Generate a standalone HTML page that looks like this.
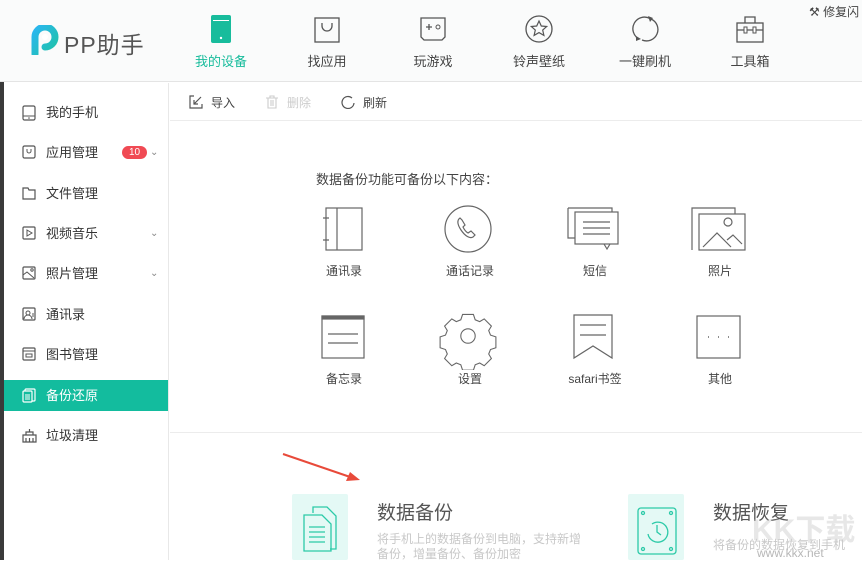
<!DOCTYPE html>
<html><head><meta charset="utf-8"><style>
*{margin:0;padding:0;box-sizing:border-box}
body{width:862px;height:560px;overflow:hidden;background:#fff;font-family:"Liberation Sans","Noto Sans CJK SC",sans-serif;position:relative;color:#333}
.abs{position:absolute}
.hdr{left:0;top:0;width:862px;height:82px;background:#fafbfb;border-bottom:1px solid #e4e4e4}
.nav{position:absolute;top:15px;width:90px;text-align:center;font-size:13px;color:#444}
.nav svg{display:block;margin:0 auto 8px}
.side{left:4px;top:83px;width:165px;height:477px;background:#fff;border-right:1px solid #e8e8e8}
.si{position:absolute;left:0;width:164px;height:31px;font-size:13px;color:#333;line-height:31px;padding-left:42px}
.si svg{position:absolute;left:18px;top:8px}
.tb{left:170px;top:83px;width:692px;height:38px;border-bottom:1px solid #ececec;font-size:12px;color:#444}
.lbl{position:absolute;font-size:12px;color:#444;text-align:center;width:100px}
</style></head><body>
<div class="abs" style="left:0;top:0;width:4px;height:560px;background:#3a3a3a"></div>
<div class="abs hdr"></div>
<svg class="abs" style="left:31px;top:25px" width="30" height="30" viewBox="0 0 30 30"><defs><linearGradient id="g" x1="0" y1="0" x2="1" y2="1"><stop offset="0" stop-color="#2bb6f0"/><stop offset="1" stop-color="#1ec3a6"/></linearGradient></defs><path d="M4 29V12A10 10 0 1 1 14 22" fill="none" stroke="url(#g)" stroke-width="7" stroke-linecap="round"/><circle cx="14" cy="12" r="3" fill="#fff"/></svg>
<div class="abs" style="left:64px;top:26px;font-size:23px;color:#555;letter-spacing:1px">PP助手</div>
<div class="nav" style="left:176px;color:#18bc9c"><svg width="22" height="28" viewBox="0 0 22 28"><rect x="1" y="0" width="20" height="28" rx="2" fill="#18bc9c"/><rect x="3" y="5" width="16" height="1" fill="#fff"/><circle cx="11" cy="23" r="1.2" fill="#fff"/></svg>我的设备</div>
<div class="nav" style="left:282px"><svg width="26" height="28" viewBox="0 0 26 28"><rect x="1" y="3" width="24" height="24" fill="none" stroke="#555" stroke-width="1.3"/><path d="M8 8v3a5 5 0 0 0 10 0V8" fill="none" stroke="#555" stroke-width="1.3"/></svg>找应用</div>
<div class="nav" style="left:388px"><svg width="28" height="28" viewBox="0 0 28 28"><path d="M2 3h24v19l-3 3H5l-3-3z" fill="none" stroke="#555" stroke-width="1.3"/><path d="M7 12h6M10 9v6" stroke="#555" stroke-width="1.3"/><circle cx="19" cy="12" r="2" fill="none" stroke="#555"/></svg>玩游戏</div>
<div class="nav" style="left:494px"><svg width="28" height="28" viewBox="0 0 28 28"><circle cx="14" cy="14" r="13" fill="none" stroke="#555" stroke-width="1.3"/><path d="M14 6l2.3 5 5.4.5-4 3.6 1.2 5.3L14 17.6 9.1 20.4l1.2-5.3-4-3.6 5.4-.5z" fill="none" stroke="#555" stroke-width="1.2"/></svg>铃声壁纸</div>
<div class="nav" style="left:600px"><svg width="30" height="28" viewBox="0 0 30 28"><path d="M9 24A11 11 0 0 1 20 3.5M21 4A11 11 0 0 1 12 25" fill="none" stroke="#555" stroke-width="1.3"/><path d="M18 1l5 2-3 4z M6 21l5 3-5 2z" fill="#555"/></svg>一键刷机</div>
<div class="nav" style="left:705px"><svg width="28" height="28" viewBox="0 0 28 28"><rect x="1" y="8" width="26" height="19" fill="none" stroke="#555" stroke-width="1.3"/><path d="M9 8V2h10v6M1 15h26" fill="none" stroke="#555" stroke-width="1.3"/><rect x="8" y="12" width="3" height="6" fill="#fff" stroke="#555"/><rect x="17" y="12" width="3" height="6" fill="#fff" stroke="#555"/></svg>工具箱</div>
<div class="abs" style="left:809px;top:3px;font-size:12px;color:#444;white-space:nowrap">&#x2692;&#xFE0E; 修复闪</div>

<div class="abs side">
<div class="si" style="top:14px"><svg width="14" height="16" viewBox="0 0 14 16"><rect x="1" y="1" width="12" height="14" rx="1.5" fill="none" stroke="#555" stroke-width="1.2"/><path d="M1 11h12" stroke="#555"/><circle cx="7" cy="13" r=".8" fill="#555"/></svg>我的手机</div>
<div class="si" style="top:54px"><svg width="14" height="14" viewBox="0 0 14 14"><rect x="1" y="1" width="12" height="12" rx="1.5" fill="none" stroke="#555" stroke-width="1.2"/><path d="M5 4v2a2 2 0 0 0 4 0V4" fill="none" stroke="#555"/></svg>应用管理<span style="position:absolute;left:118px;top:9px;width:25px;height:13px;border-radius:7px;background:#f04a54;color:#fff;font-size:10px;line-height:13px;text-align:center">10</span><span style="position:absolute;left:146px;top:0;color:#888;font-size:10px">&#8964;</span></div>
<div class="si" style="top:95px"><svg width="14" height="14" viewBox="0 0 14 14"><path d="M1 2h5l1 2h6v9H1z" fill="none" stroke="#555" stroke-width="1.2"/></svg>文件管理</div>
<div class="si" style="top:135px"><svg width="14" height="14" viewBox="0 0 14 14"><rect x="1" y="1" width="12" height="12" rx="1" fill="none" stroke="#555" stroke-width="1.2"/><path d="M5 4l5 3-5 3z" fill="none" stroke="#555"/></svg>视频音乐<span style="position:absolute;left:146px;top:0;color:#888;font-size:10px">&#8964;</span></div>
<div class="si" style="top:175px"><svg width="14" height="14" viewBox="0 0 14 14"><rect x="1" y="1" width="12" height="12" rx="1" fill="none" stroke="#555" stroke-width="1.2"/><path d="M1 9l4-3 7 6" fill="none" stroke="#555"/><circle cx="10" cy="4" r="1.2" fill="none" stroke="#555"/></svg>照片管理<span style="position:absolute;left:146px;top:0;color:#888;font-size:10px">&#8964;</span></div>
<div class="si" style="top:216px"><svg width="14" height="14" viewBox="0 0 14 14"><rect x="1" y="1" width="12" height="12" rx="1" fill="none" stroke="#555" stroke-width="1.2"/><circle cx="6" cy="6" r="2" fill="none" stroke="#555"/><path d="M2 12a4 4 0 0 1 8 0M11 6v4" fill="none" stroke="#555"/></svg>通讯录</div>
<div class="si" style="top:256px"><svg width="14" height="14" viewBox="0 0 14 14"><rect x="1" y="1" width="12" height="12" rx="1" fill="none" stroke="#555" stroke-width="1.2"/><path d="M1 4h12" stroke="#555"/><rect x="4" y="7" width="6" height="3" fill="none" stroke="#555"/></svg>图书管理</div>
<div class="si" style="top:297px;background:#13bc9e;color:#fff"><svg width="14" height="15" viewBox="0 0 14 15"><rect x="3" y="1" width="10" height="12" rx="1" fill="none" stroke="#fff" stroke-width="1.2"/><rect x="1" y="3" width="9" height="11" rx="1" fill="#13bc9e" stroke="#fff" stroke-width="1.2"/><path d="M3 7h5M3 9h5M3 11h5" stroke="#fff"/></svg>备份还原</div>
<div class="si" style="top:337px"><svg width="15" height="15" viewBox="0 0 15 15"><path d="M1 7h13v7H1zM4 7V4h7v3M7.5 1v3M4 10v4M7.5 10v4M11 10v4" fill="none" stroke="#555" stroke-width="1.2"/></svg>垃圾清理</div>
</div>

<div class="abs tb">
<svg class="abs" style="left:19px;top:12px" width="14" height="14" viewBox="0 0 14 14"><path d="M5 1H1v12h12V9" fill="none" stroke="#555" stroke-width="1.2"/><path d="M12 2L5 9M5 5v4h4" fill="none" stroke="#555" stroke-width="1.2"/></svg>
<span class="abs" style="left:41px;top:11px">导入</span>
<svg class="abs" style="left:95px;top:12px" width="14" height="14" viewBox="0 0 14 14"><path d="M1 3h12M5 3V1h4v2M3 3v10h8V3M6 5v6M8 5v6" fill="none" stroke="#ccc" stroke-width="1.1"/></svg>
<span class="abs" style="left:117px;top:11px;color:#ccc">删除</span>
<svg class="abs" style="left:171px;top:12px" width="14" height="14" viewBox="0 0 14 14"><path d="M11 3A6 6 0 1 0 13 8" fill="none" stroke="#555" stroke-width="1.2"/></svg>
<span class="abs" style="left:193px;top:11px">刷新</span>
</div>

<div class="abs" style="left:316px;top:169px;font-size:13px;color:#444">数据备份功能可备份以下内容：</div>
<svg class="abs" style="left:300px;top:200px" width="470" height="170" viewBox="300 200 470 170" fill="none" stroke="#666" stroke-width="1.2">
<rect x="326" y="208" width="36" height="42"/><path d="M337 208v42M323 218h6M323 240h6"/>
<circle cx="468" cy="229" r="23"/><path d="M460 218c-3 2-3 6 1 12s9 9 12 7l2-2-4-4-3 2c-2-1-4-4-5-6l2-2-3-5z"/>
<path d="M568 208h44v4M568 208v30h7"/><rect x="575" y="212" width="43" height="32"/><path d="M604 244l3 5 3-5M583 222h27M583 228h27M583 234h27"/>
<path d="M692 250v-42h43v6"/><rect x="699" y="214" width="46" height="36"/><path d="M703 247l14-14 14 14M727 240l6-5 9 9"/><circle cx="728" cy="222" r="4"/>
<rect x="322" y="316" width="42" height="42"/><rect x="322" y="316" width="42" height="3" fill="#666"/><path d="M328 334h30M328 343h30"/>
<g transform="translate(468 336) scale(0.9) translate(-468 -338)"><path d="M462 314h12l2 6 5 2 5-3 8 8-3 5 2 5 6 2v12l-6 2-2 5 3 5-8 8-5-3-5 2-2 6h-12l-2-6-5-2-5 3-8-8 3-5-2-5-6-2v-12l6-2 2-5-3-5 8-8 5 3 5-2z"/><circle cx="468" cy="338" r="8"/></g>
<path d="M574 315h38v43l-19-12-19 12zM580 325h26M580 335h26"/>
<rect x="697" y="316" width="43" height="42"/><path d="M708 337h1M718 337h1M728 337h1" stroke-width="1.5"/>
</svg>
<div class="lbl" style="left:294px;top:262px">通讯录</div>
<div class="lbl" style="left:420px;top:262px">通话记录</div>
<div class="lbl" style="left:545px;top:262px">短信</div>
<div class="lbl" style="left:670px;top:262px">照片</div>
<div class="lbl" style="left:294px;top:370px">备忘录</div>
<div class="lbl" style="left:420px;top:370px">设置</div>
<div class="lbl" style="left:545px;top:370px">safari书签</div>
<div class="lbl" style="left:670px;top:370px">其他</div>

<div class="abs" style="left:170px;top:432px;width:692px;height:1px;background:#ececec"></div>
<svg class="abs" style="left:280px;top:450px" width="90" height="36"><path d="M3 4L76 29" stroke="#e84a3a" stroke-width="2"/><path d="M80 30l-14 1 4-9z" fill="#e84a3a"/></svg>

<div class="abs" style="left:292px;top:494px;width:56px;height:66px;background:#e4f9f5;border-radius:2px"></div>
<svg class="abs" style="left:300px;top:505px" width="44" height="50" viewBox="0 0 44 50" fill="none" stroke="#2ccaa8" stroke-width="1.3"><path d="M13 8V2h14l9 9v33h-6"/><path d="M4 10h18l9 9v27H4z"/><path d="M9 22h16M9 27h16M9 32h16M9 37h16"/></svg>
<div class="abs" style="left:377px;top:498px;font-size:19px;color:#555">数据备份</div>
<div class="abs" style="left:377px;top:532px;font-size:12px;color:#c8c8c8;line-height:15px;width:210px">将手机上的数据备份到电脑，支持新增备份，增量备份、备份加密</div>

<div class="abs" style="left:628px;top:494px;width:56px;height:66px;background:#e4f9f5;border-radius:2px"></div>
<svg class="abs" style="left:636px;top:506px" width="42" height="50" viewBox="0 0 42 50" fill="none" stroke="#2ccaa8" stroke-width="1.3"><rect x="2" y="2" width="38" height="46" rx="3"/><circle cx="7" cy="7" r="1.5"/><circle cx="35" cy="7" r="1.5"/><circle cx="7" cy="43" r="1.5"/><circle cx="35" cy="43" r="1.5"/><path d="M12 28a10 10 0 1 0 4-10M21 19v7l4 3"/></svg>
<div class="abs" style="left:713px;top:498px;font-size:19px;color:#555">数据恢复</div>
<div class="abs" style="left:713px;top:536px;font-size:12px;color:#c8c8c8">将备份的数据恢复到手机</div>
<div class="abs" style="left:752px;top:505px;font-size:30px;color:#ccc;opacity:.45;font-weight:bold">KK下载</div>
<div class="abs" style="left:757px;top:546px;font-size:12px;color:#999;opacity:.7">www.kkx.net</div>
</body></html>
